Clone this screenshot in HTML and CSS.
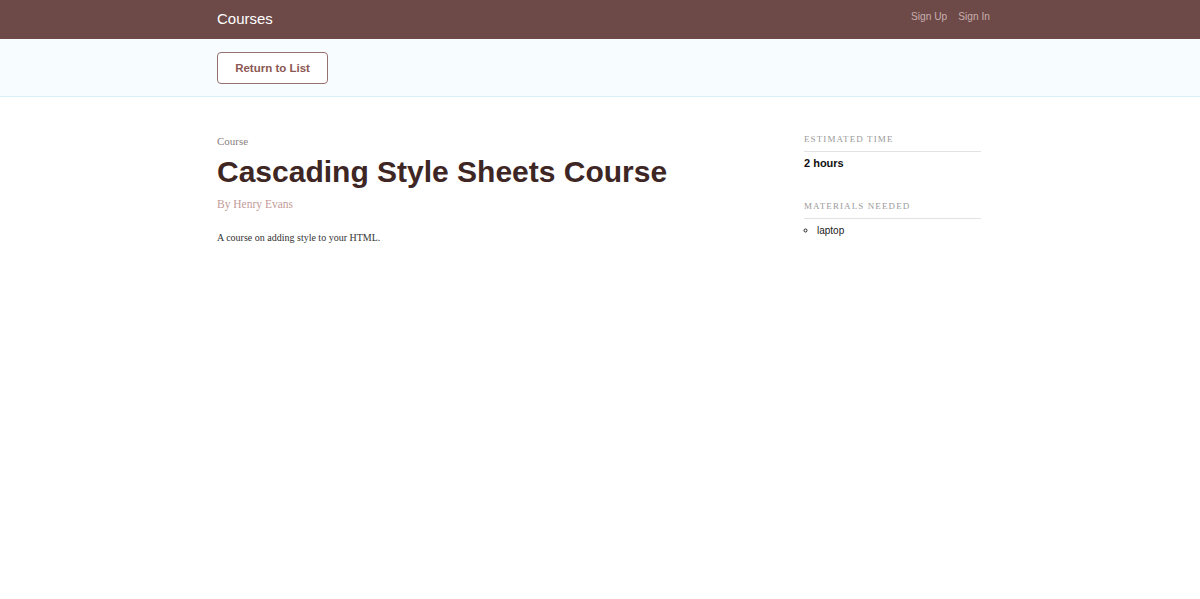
FILE: index.html
```html
<!DOCTYPE html>
<html>
<head>
<meta charset="utf-8">
<link rel="stylesheet" href="styles.css">
</head>
<body>
<header class="topbar">
  <div class="container topbar-inner">
    <a class="brand">Courses</a>
    <nav class="nav">
      <a>Sign Up</a>
      <a>Sign In</a>
    </nav>
  </div>
</header>
<div class="actions">
  <div class="container">
    <button class="btn">Return to List</button>
  </div>
</div>
<main class="container content">
  <section class="main-col">
    <div class="kicker">Course</div>
    <h1 class="title">Cascading Style Sheets Course</h1>
    <div class="author">By Henry Evans</div>
    <p class="desc">A course on adding style to your HTML.</p>
  </section>
  <aside class="side">
    <div class="side-block">
      <h3 class="side-head">Estimated Time</h3>
      <div class="time">2 hours</div>
    </div>
    <div class="side-block">
      <h3 class="side-head">Materials Needed</h3>
      <ul class="materials"><li>laptop</li></ul>
    </div>
  </aside>
</main>
</body>
</html>
```

FILE: styles.css
```css
html, body { margin: 0; padding: 0; background: #fff; }
body { font-family: "Liberation Serif", serif; }
.container { width: 766px; margin: 0 auto; box-sizing: border-box; }
.topbar { background: #6d4a48; height: 39px; }
.topbar-inner { display: flex; justify-content: space-between; align-items: center; height: 39px; }
.brand { font-family: "Liberation Sans", sans-serif; color: #fff; font-size: 15px; position: relative; top: -1px; }
.nav { display: flex; gap: 11px; margin-right: -7px; position: relative; top: -3px; }
.nav a { font-family: "Liberation Sans", sans-serif; color: #c8aeae; font-size: 10.2px; }
.actions { background: #f7fcff; border-bottom: 1px solid #d6f2f8; height: 57px; display: flex; align-items: center; }
.actions .container { padding-top: 1px; }
.btn { font-family: "Liberation Sans", sans-serif; font-weight: bold; font-size: 11.5px; color: #8c5753; background: #fff; border: 1px solid #95706e; border-radius: 4px; width: 111px; height: 32px; padding: 0; cursor: pointer; }
.content { display: flex; justify-content: space-between; padding-top: 38px; }
.main-col { width: 520px; }
.kicker { font-size: 11px; color: #8a7f7f; line-height: 13px; margin-top: 0; }
.title { font-family: "Liberation Sans", sans-serif; font-weight: bold; font-size: 30px; color: #3e2624; margin: 6px 0 0; line-height: 36px; }
.author { font-size: 11.5px; color: #c39b98; margin-top: 7px; line-height: 14px; }
.desc { font-size: 10px; color: #333; margin: 21px 0 0; line-height: 12px; }
.side { width: 177px; margin-right: 2px; }
.side-block { margin-bottom: 32px; }
.side-head { font-family: "Liberation Serif", serif; font-weight: normal; font-size: 9px; letter-spacing: 1.1px; text-transform: uppercase; color: #9a9a9a; margin: 0; padding-bottom: 6px; border-bottom: 1px solid #e2e2e2; line-height: 11px; position: relative; top: -1px; }
.time { font-family: "Liberation Sans", sans-serif; font-weight: bold; font-size: 11px; color: #111; margin-top: 4px; line-height: 13px; }
.materials { list-style: circle; margin: 5px 0 0; padding-left: 13px; font-family: "Liberation Sans", sans-serif; font-size: 10px; color: #222; line-height: 12px; }
```
